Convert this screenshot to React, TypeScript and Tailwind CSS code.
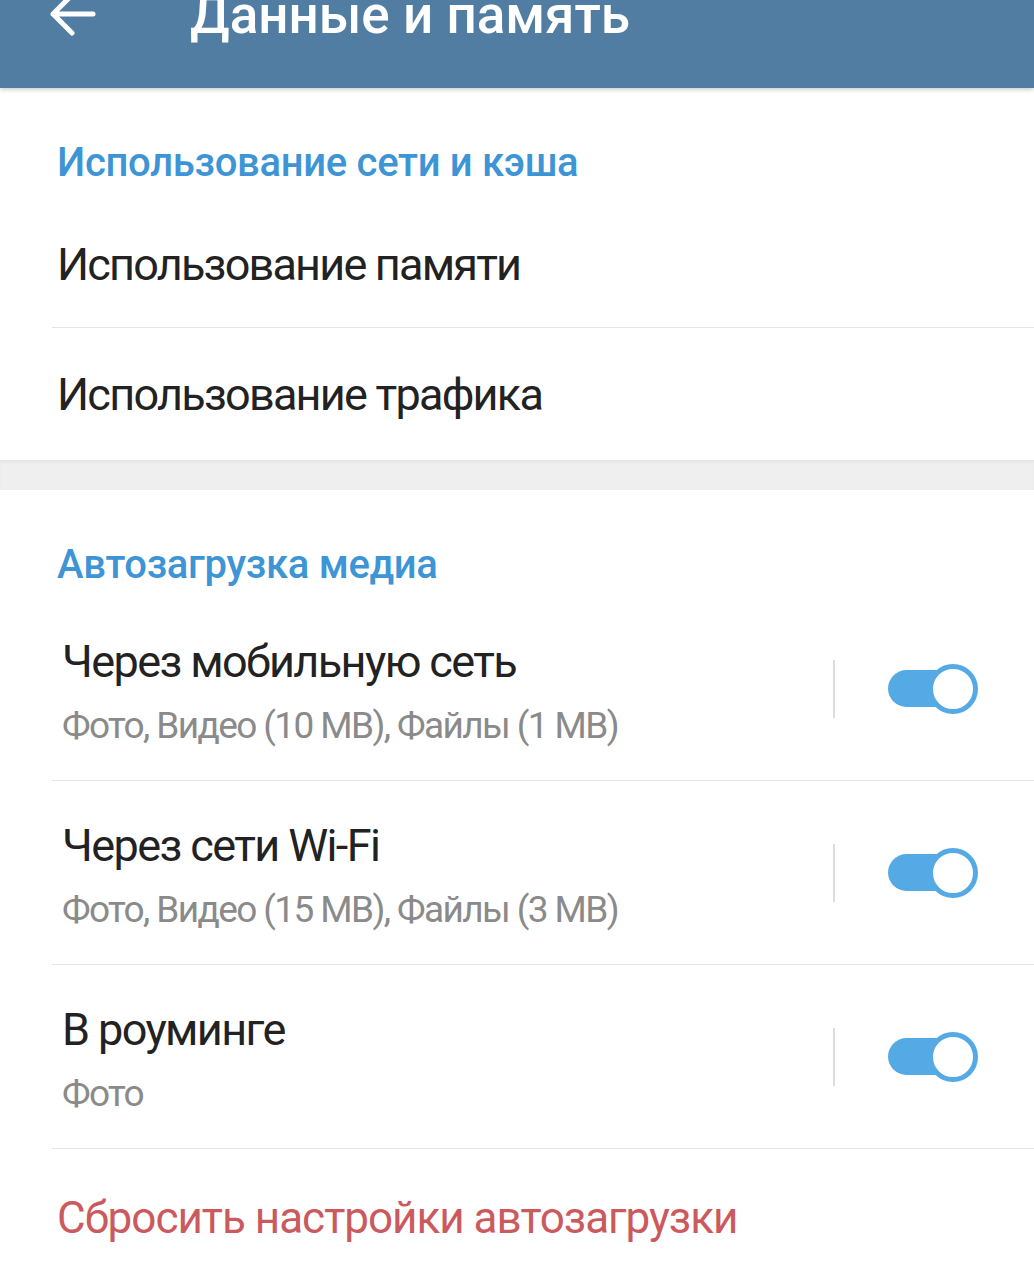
import React from 'react';

const autoRows = [
    { title: 'Через мобильную сеть', sub: 'Фото, Видео (10 MB), Файлы (1 MB)' },
    { title: 'Через сети Wi-Fi', sub: 'Фото, Видео (15 MB), Файлы (3 MB)' },
    { title: 'В роуминге', sub: 'Фото' },
];

const Toggle: React.FC = () => (
    <div className="relative w-[90px] h-[50px] shrink-0">
        <div className="absolute left-0 top-[6px] w-[76px] h-[37px] rounded-full bg-[#55aae6]" />
        <div className="absolute right-0 top-0 w-[50px] h-[50px] rounded-full bg-white border-[5px] border-[#55aae6]" />
    </div>
);

const SectionTitle: React.FC<{ children: React.ReactNode }> = ({ children }) => (
    <div className="h-[107px] pt-[55px] pl-[57px]">
        <p className="text-[40px] leading-none font-medium tracking-[-0.3px] text-[#3d95d5]">{children}</p>
    </div>
);

const App: React.FC = () => {
    return (
        <div className="w-[1034px] h-[1280px] bg-white overflow-hidden font-['Roboto','Liberation_Sans',sans-serif]">
            {/* шапка */}
            <header className="relative z-10 h-[88px] bg-[#527da3] flex items-start overflow-hidden shadow-[0_2px_4px_rgba(0,0,0,0.18)]">
                <svg className="ml-[50px] -mt-[10px] shrink-0" width="48" height="48" viewBox="0 0 48 48" fill="none">
                    <path d="M43 24H3M22 5L3 24l19 19" stroke="white" strokeWidth="5" strokeLinecap="round" strokeLinejoin="round" />
                </svg>
                <h1 className="ml-[92px] -mt-[11px] text-[53px] leading-none font-medium text-white whitespace-nowrap">
                    Данные и память
                </h1>
            </header>

            {/* сеть и кэш */}
            <section className="bg-white">
                <SectionTitle>Использование сети и кэша</SectionTitle>
                <div className="h-[132px] flex items-center pl-[57px] pt-[6px]">
                    <span className="text-[45px] leading-none tracking-[-1.8px] text-[#222222]">Использование памяти</span>
                </div>
                <div className="ml-[52px] h-px bg-[#e4e4e4]" />
                <div className="h-[132px] flex items-center pl-[57px]">
                    <span className="text-[45px] leading-none tracking-[-1.75px] text-[#222222]">Использование трафика</span>
                </div>
            </section>

            <div className="h-[30px] bg-[#efefef] shadow-[inset_0_2px_2px_rgba(0,0,0,0.04)]" />

            {/* автозагрузка */}
            <section className="bg-white">
                <SectionTitle>Автозагрузка медиа</SectionTitle>
                {autoRows.map((row) => (
                    <div key={row.title}>
                        <div className="h-[183px] flex items-center">
                            <div className="flex-1 pl-[62px] self-start pt-[42px]">
                                <p className="text-[45px] leading-none tracking-[-1.6px] text-[#222222]">{row.title}</p>
                                <p className="mt-[23px] text-[37px] leading-none tracking-[-1.6px] text-[#8a8a8a]">{row.sub}</p>
                            </div>
                            <div className="w-[2px] h-[58px] bg-[#dcdcdc]" />
                            <div className="ml-[53px] mr-[56px]">
                                <Toggle />
                            </div>
                        </div>
                        <div className="ml-[52px] h-px bg-[#e4e4e4]" />
                    </div>
                ))}
                <div className="pt-[47px] pl-[57px]">
                    <span className="text-[44px] leading-none tracking-[-1px] text-[#cb5a5e]">Сбросить настройки автозагрузки</span>
                </div>
            </section>
        </div>
    );
};

export default App;
